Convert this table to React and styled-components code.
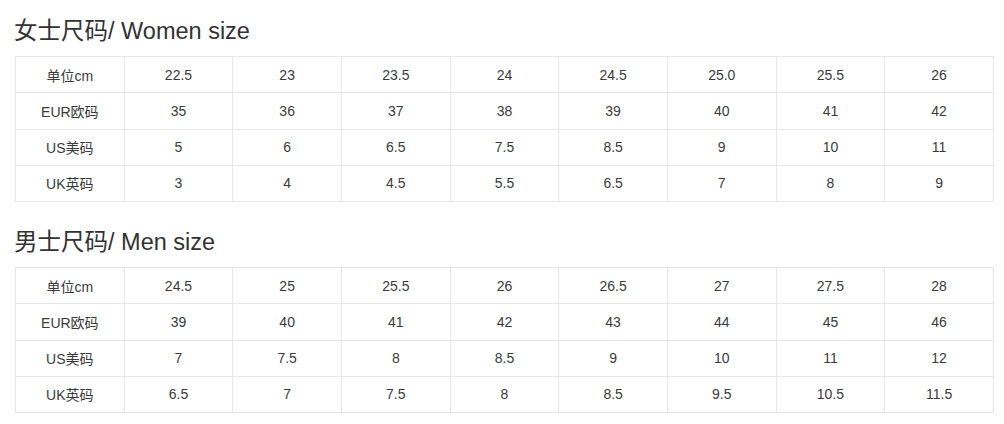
import React from 'react';
import styled, { createGlobalStyle } from 'styled-components';

const GlobalStyle = createGlobalStyle`
  body {
    margin: 0;
    background: #fff;
    font-family: "Liberation Sans", "Noto Sans CJK SC", sans-serif;
    color: #333;
  }
`;

const women = [
  ['单位cm', '22.5', '23', '23.5', '24', '24.5', '25.0', '25.5', '26'],
  ['EUR欧码', '35', '36', '37', '38', '39', '40', '41', '42'],
  ['US美码', '5', '6', '6.5', '7.5', '8.5', '9', '10', '11'],
  ['UK英码', '3', '4', '4.5', '5.5', '6.5', '7', '8', '9'],
];

const men = [
  ['单位cm', '24.5', '25', '25.5', '26', '26.5', '27', '27.5', '28'],
  ['EUR欧码', '39', '40', '41', '42', '43', '44', '45', '46'],
  ['US美码', '7', '7.5', '8', '8.5', '9', '10', '11', '12'],
  ['UK英码', '6.5', '7', '7.5', '8', '8.5', '9.5', '10.5', '11.5'],
];

const Page = styled.div`
  padding: 0 11px 0 15px;
`;

const Section = styled.section`
  & + & {
    margin-top: 9px;
  }
`;

const Heading = styled.h2`
  margin: 0;
  height: 56px;
  display: flex;
  align-items: center;
  margin-left: -1px;
  font-size: 23.5px;
  font-weight: normal;
  color: #333;
  padding-top: 1px;
  box-sizing: border-box;
`;

const Table = styled.table`
  width: 979px;
  table-layout: fixed;
  border-collapse: collapse;
  border: 1px solid #e2e2e2;
`;

const Cell = styled.td`
  height: 35.25px;
  padding: 0;
  border: 1px solid #e6e6e6;
  text-align: center;
  font-size: 14px;
  color: #3a3a3a;
`;

function SizeTable({ title, rows }) {
  return (
    <Section>
      <Heading>{title}</Heading>
      <Table>
        <tbody>
          {rows.map((row) => (
            <tr key={row[0]}>
              {row.map((v, i) => (
                <Cell key={i}>{v}</Cell>
              ))}
            </tr>
          ))}
        </tbody>
      </Table>
    </Section>
  );
}

export default function App() {
  return (
    <Page>
      <GlobalStyle />
      <SizeTable title="女士尺码/ Women size" rows={women} />
      <SizeTable title="男士尺码/ Men size" rows={men} />
    </Page>
  );
}
